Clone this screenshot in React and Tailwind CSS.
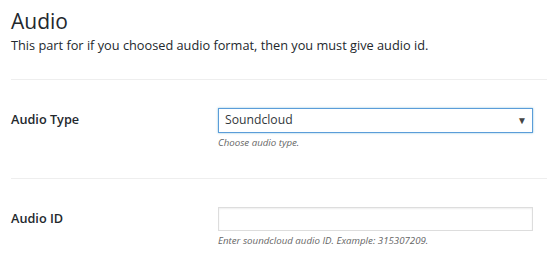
export default function App() {
  return (
    <div className="w-[547px] h-[263px] bg-white overflow-hidden text-[#23282d]" style={{ fontFamily: '"Open Sans", "Noto Sans", sans-serif' }}>
      <div className="pl-[11px]">
        <h2 className="pt-[8px] text-[21px] leading-[26px] font-normal">Audio</h2>
        <p className="mt-[2px] text-[12.75px] leading-[18px]">This part for if you choosed audio format, then you must give audio id.</p>
        <div className="mt-[25px] h-px bg-[#eeeeee]" />
        <div className="flex pt-[28px] h-[98px]">
          <div className="w-[207px] text-[12.7px] font-semibold pt-[1px] leading-[20px]">Audio Type</div>
          <div className="flex flex-col">
            <div className="w-[315px] h-[25px] border border-[#5b9dd9] flex items-center justify-between pl-[6px] pr-[5px] shadow-[0_0_2px_rgba(30,140,190,0.5)]">
              <span className="text-[12.2px] text-[#32373c]">Soundcloud</span>
              <span className="text-[10px] text-[#444]">▼</span>
            </div>
            <span className="mt-[3px] text-[9.7px] italic text-[#666]">Choose audio type.</span>
          </div>
        </div>
        <div className="h-px bg-[#eeeeee]" />
        <div className="flex pt-[28px]">
          <div className="w-[207px] text-[12.7px] font-semibold pt-[1px] leading-[20px]">Audio ID</div>
          <div className="flex flex-col">
            <div className="w-[315px] h-[24px] border border-[#dddddd] shadow-[inset_0_1px_2px_rgba(0,0,0,0.07)]" />
            <span className="mt-[3px] text-[9.7px] italic text-[#666]">Enter soundcloud audio ID. Example: 315307209.</span>
          </div>
        </div>
      </div>
    </div>
  );
}
